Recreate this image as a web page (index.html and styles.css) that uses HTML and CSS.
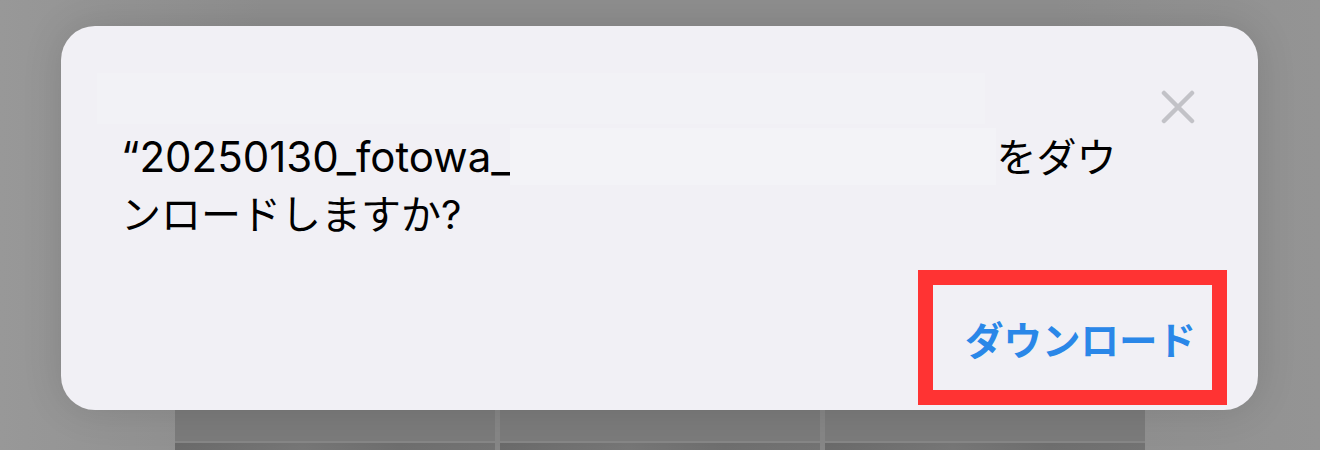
FILE: index.html
```html
<!DOCTYPE html>
<html>
<head>
    <title>Download</title>
    <link rel="stylesheet" href="styles.css">
</head>
<body>
<div class="photo-grid">
    <div class="photo"></div>
    <div class="photo"></div>
    <div class="photo"></div>
    <div class="photo photo-dark"></div>
    <div class="photo photo-dark"></div>
    <div class="photo photo-dark"></div>
</div>

<div class="dialog">
    <div class="redact-strip"></div>
    <div class="dialog-body">
        <p class="dialog-message">
            <span class="line">“20250130_fotowa_<span class="redacted"></span><span class="jp">をダウ</span></span>
            <span class="line jp">ンロードしますか?</span>
        </p>
        <button class="close-button" aria-label="Close">
            <svg width="34" height="34" viewBox="0 0 34 34">
                <path d="M3 3 L31 31 M31 3 L3 31" stroke="#c2c2c7" stroke-width="4.5" stroke-linecap="round" fill="none"/>
            </svg>
        </button>
    </div>
    <div class="dialog-footer">
        <button class="download-button">ダウンロード</button>
    </div>
</div>
</body>
</html>
```

FILE: styles.css
```css
* {
    margin: 0;
    padding: 0;
    box-sizing: border-box;
}

body {
    font-family: 'Inter', 'Noto Sans CJK JP', sans-serif;
    background: linear-gradient(90deg, #989898 0%, #8e8e8e 20%, #8e8e8e 80%, #949494 100%);
    height: 450px;
    overflow: hidden;
}

.photo-grid {
    margin-left: 175px;
    margin-top: 200px;
    width: 970px;
    height: 250px;
    display: grid;
    grid-template-columns: 1fr 1fr 1fr;
    grid-template-rows: 241px 1fr;
    column-gap: 5px;
    row-gap: 2px;
    background: #868686;
}

.photo {
    background: #7b7b7b;
}

.photo-dark {
    background: linear-gradient(90deg, #6a6a6a, #767676 40%, #6e6e6e 70%, #737373);
}

.dialog {
    position: absolute;
    left: 61px;
    top: 26px;
    width: 1197px;
    height: 384px;
    background: #f1f0f5;
    border-radius: 34px;
    box-shadow: 0 0 40px rgba(0, 0, 0, 0.12);
    display: flex;
    flex-direction: column;
    padding: 0 31px 5px 60px;
}

.redact-strip {
    position: absolute;
    left: 36px;
    top: 47px;
    width: 888px;
    height: 51px;
    background: #f2f2f6;
}

.dialog-body {
    display: flex;
    align-items: flex-start;
    position: relative;
}

.dialog-message {
    flex: 1;
    margin-top: 102px;
    font-size: 42px;
    line-height: 57px;
    color: #000;
}

.line {
    display: block;
    white-space: nowrap;
}

.jp {
    font-size: 40px;
}

.redacted {
    display: inline-block;
    width: 486px;
    height: 57px;
    vertical-align: top;
    background: #f3f3f7;
}

.close-button {
    margin-top: 64px;
    margin-right: 32px;
    width: 34px;
    height: 34px;
    border: none;
    background: none;
    display: flex;
}

.dialog-footer {
    margin-top: auto;
    display: flex;
    justify-content: flex-end;
}

.download-button {
    width: 309px;
    height: 135px;
    border: 15px solid #ff3333;
    background: transparent;
    color: #2a87e8;
    font-family: 'Noto Sans CJK JP', sans-serif;
    font-size: 38.5px;
    font-weight: bold;
    text-align: right;
    padding-right: 16px;
}
```
